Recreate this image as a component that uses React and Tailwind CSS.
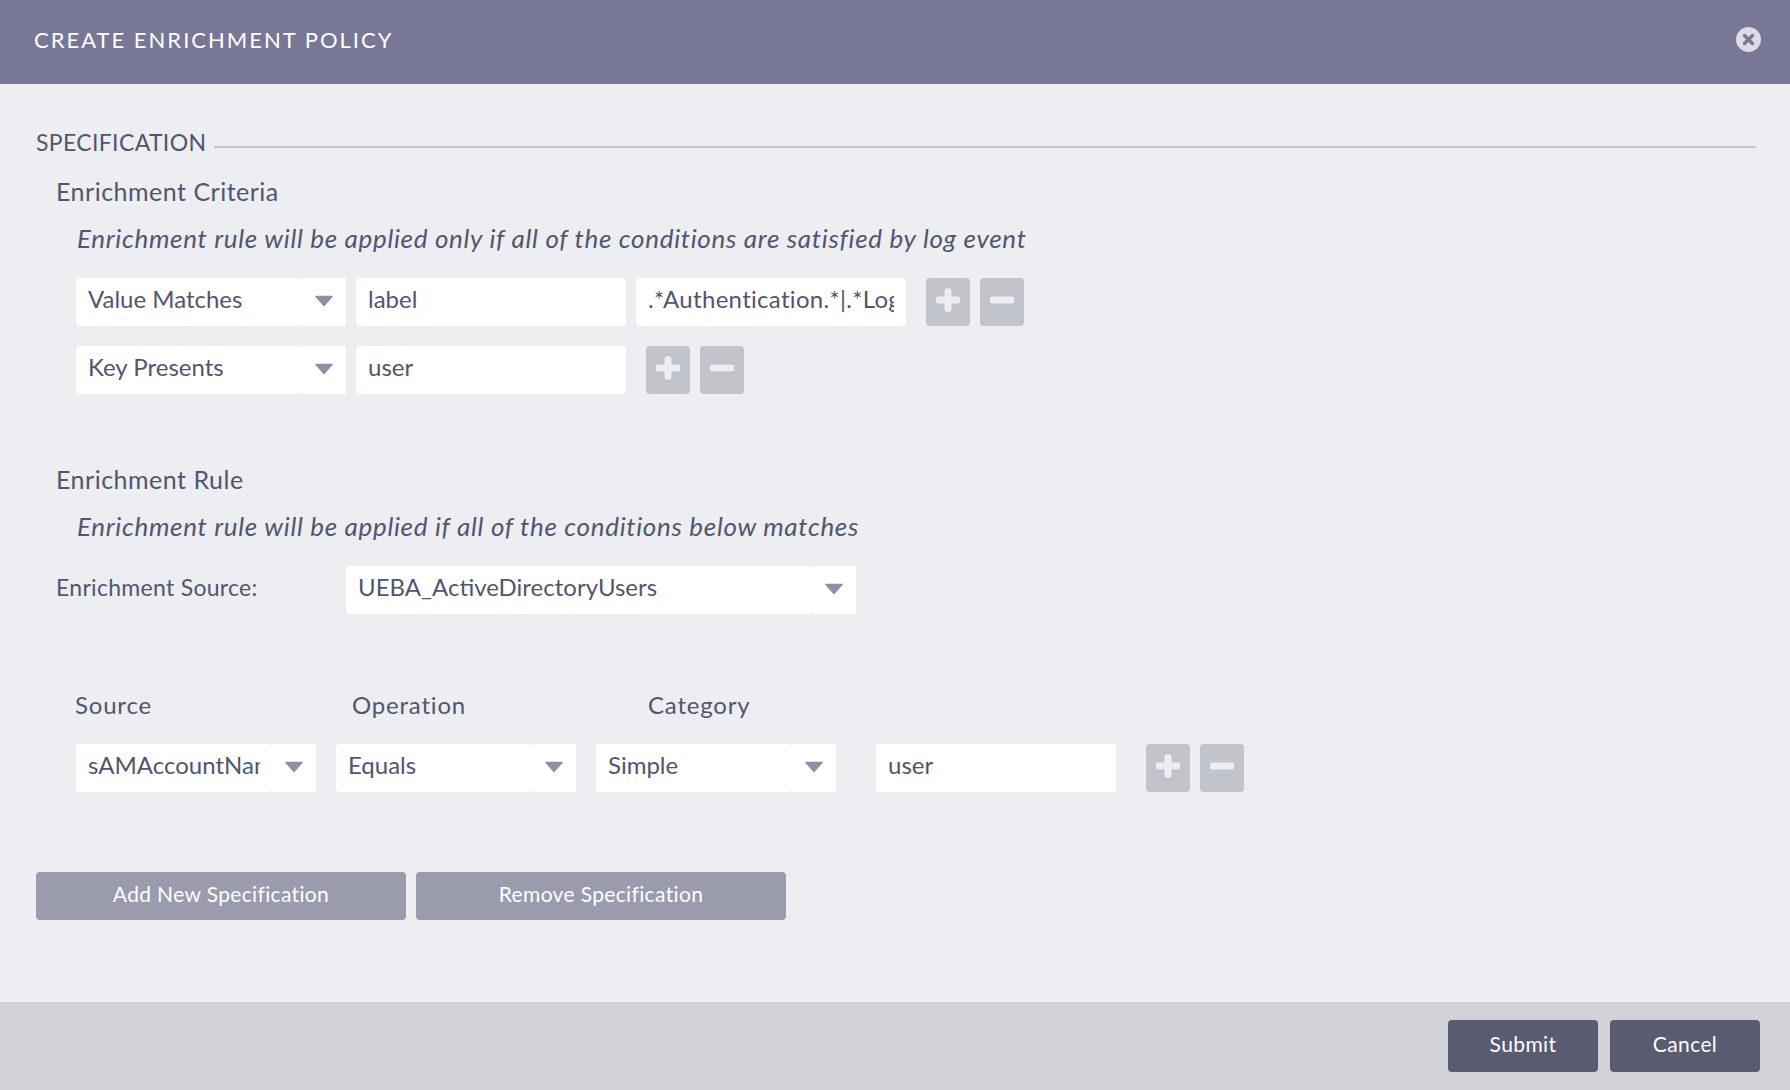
import React from "react";

const font = "font-['Lato','Noto_Sans',sans-serif]";

const Arrow = () => (
  <svg width="20" height="12" viewBox="0 0 20 12" className="-mt-[3px]">
    <path d="M2 1.5h16L10 10.5z" fill="#8f90a6" stroke="#8f90a6" strokeWidth="1.5" strokeLinejoin="round" />
  </svg>
);

const Select = ({ value, width }) => (
  <div className={`flex h-[48px] shrink-0 ${width}`}>
    <div className="flex-1 min-w-0 bg-white rounded-[4px] px-[12px] flex items-center">
      <span className="block w-full overflow-hidden whitespace-nowrap -mt-[6px]">{value}</span>
    </div>
    <div className="w-[44px] bg-white flex items-center justify-center">
      <Arrow />
    </div>
  </div>
);

const Input = ({ value, width, spaced }) => (
  <div className={`h-[48px] shrink-0 bg-white rounded-[4px] px-[12px] flex items-center ${width}`}>
    <span className={`block w-full overflow-hidden whitespace-nowrap -mt-[6px] ${spaced ? "tracking-[0.3px]" : ""}`}>{value}</span>
  </div>
);

const IconButton = ({ minus }) => (
  <button className="w-[44px] h-[48px] shrink-0 rounded-[4px] bg-[#c2c4cc] flex items-center justify-center">
    <svg width="24" height="24" viewBox="0 0 24 24" className="-mt-[4px]">
      {!minus && <path d="M12 3.5v17" stroke="#eceef2" strokeWidth="7" strokeLinecap="round" />}
      <path d="M2.5 12h19" stroke="#eceef2" strokeWidth="7" strokeLinecap="round" />
    </svg>
  </button>
);

const AddRemove = () => (
  <div className="flex gap-[10px]">
    <IconButton />
    <IconButton minus />
  </div>
);

const GrayButton = ({ children }) => (
  <button className="w-[370px] h-[48px] rounded-[4px] bg-[#9a9cae] text-white text-[21px] tracking-[0.35px] flex items-center justify-center pb-[5px]">
    {children}
  </button>
);

const FooterButton = ({ children }) => (
  <button className="w-[150px] h-[52px] rounded-[4px] bg-[#595b71] text-white text-[21px] tracking-[0.4px] flex items-center justify-center pb-[5px]">
    {children}
  </button>
);

const SectionTitle = ({ children, className = "" }) => (
  <h2 className={`h-[30px] leading-[30px] -ml-[1px] text-[25px] tracking-[0.5px] ${className}`}>{children}</h2>
);

const Hint = ({ children }) => (
  <p className="h-[30px] leading-[30px] mt-[17px] pl-[20px] text-[26px] tracking-[0.68px] italic">{children}</p>
);

export default function App() {
  return (
    <div className={`h-[1090px] flex flex-col bg-[#eceef2] text-[#53556e] text-[24px] ${font}`}>
      {/* Header */}
      <div className="h-[84px] shrink-0 bg-[#787796] pl-[34px] pr-[29px] pb-[5px] flex items-center justify-between">
        <h1 className="text-[22px] text-white tracking-[2px] uppercase">Create Enrichment Policy</h1>
        <button className="w-[25px] h-[25px] rounded-full bg-[#dcdce2] flex items-center justify-center">
          <svg width="13" height="13" viewBox="0 0 13 13">
            <path d="M2.5 2.5l8 8M10.5 2.5l-8 8" stroke="#787796" strokeWidth="3.4" strokeLinecap="round" />
          </svg>
        </button>
      </div>

      {/* Body */}
      <div className="flex-1 pl-[36px] pr-[34px] pt-[46px]">
        <div className="flex items-end h-[24px]">
          <span className="text-[23px] leading-[24px] tracking-[0.35px] whitespace-nowrap">SPECIFICATION</span>
          <div className="flex-1 h-[2px] bg-[#c4c5cc] ml-[8px] mb-[6px]" />
        </div>

        <div className="pl-[21px] mt-[22px]">
          <SectionTitle>Enrichment Criteria</SectionTitle>
          <Hint>Enrichment rule will be applied only if all of the conditions are satisfied by log event</Hint>
          <div className="pl-[19px] mt-[25px] flex flex-col gap-[20px]">
            <div className="flex gap-[10px]">
              <Select value="Value Matches" width="w-[270px]" />
              <Input value="label" width="w-[270px]" />
              <Input value=".*Authentication.*|.*Logon.*" width="w-[270px]" spaced />
              <div className="ml-[10px]">
                <AddRemove />
              </div>
            </div>
            <div className="flex gap-[10px]">
              <Select value="Key Presents" width="w-[270px]" />
              <Input value="user" width="w-[270px]" />
              <div className="ml-[10px]">
                <AddRemove />
              </div>
            </div>
          </div>

          <SectionTitle className="mt-[70px]">Enrichment Rule</SectionTitle>
          <Hint>Enrichment rule will be applied if all of the conditions below matches</Hint>
          <div className="flex items-center mt-[25px]">
            <label className="w-[289px] text-[23px] tracking-[0.3px] -mt-[5px] -ml-[1px] mr-[1px]">Enrichment Source:</label>
            <Select value="UEBA_ActiveDirectoryUsers" width="w-[510px]" />
          </div>

          <div className="pl-[19px] mt-[76px]">
            <div className="flex h-[30px] leading-[30px] tracking-[0.8px] -ml-[1px]">
              <span className="w-[277px]">Source</span>
              <span className="w-[296px]">Operation</span>
              <span>Category</span>
            </div>
            <div className="flex mt-[24px]">
              <div className="flex gap-[20px]">
                <Select value="sAMAccountName" width="w-[240px]" />
                <Select value="Equals" width="w-[240px]" />
                <Select value="Simple" width="w-[240px]" />
              </div>
              <div className="ml-[40px]">
                <Input value="user" width="w-[240px]" />
              </div>
              <div className="ml-[30px]">
                <AddRemove />
              </div>
            </div>
          </div>
        </div>

        <div className="flex gap-[10px] mt-[80px]">
          <GrayButton>Add New Specification</GrayButton>
          <GrayButton>Remove Specification</GrayButton>
        </div>
      </div>

      {/* Footer */}
      <div className="h-[88px] shrink-0 bg-[#d1d2d7] pr-[30px] flex items-center justify-end gap-[12px]">
        <FooterButton>Submit</FooterButton>
        <FooterButton>Cancel</FooterButton>
      </div>
    </div>
  );
}
